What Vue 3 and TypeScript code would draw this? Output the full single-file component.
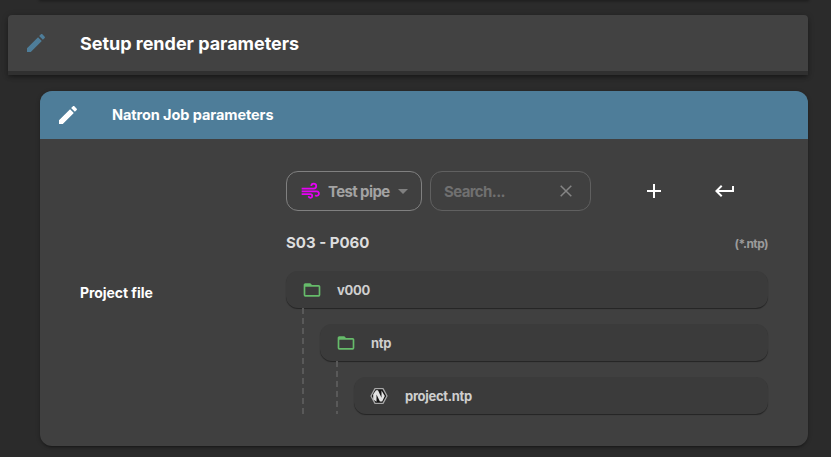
<script setup lang="ts">
interface TreeRow {
  label: string
  kind: 'folder' | 'natron'
  depth: number
}

const rows: TreeRow[] = [
  { label: 'v000', kind: 'folder', depth: 0 },
  { label: 'ntp', kind: 'folder', depth: 1 },
  { label: 'project.ntp', kind: 'natron', depth: 2 },
]
const pencil =
  'M20.71,7.04C21.1,6.65 21.1,6 20.71,5.63L18.37,3.29C18,2.9 17.35,2.9 16.96,3.29L15.12,5.12L18.87,8.87M3,17.25V21H6.75L17.81,9.93L14.06,6.18L3,17.25Z'
</script>

<template>
  <main class="page">
    <div class="previous"></div>
    <header class="step">
      <svg class="icon" viewBox="0 0 24 24"><path :d="pencil" /></svg>
      <h1>Setup render parameters</h1>
    </header>
    <section class="card">
      <div class="card-head">
        <svg class="icon" viewBox="0 0 24 24"><path :d="pencil" /></svg>
        <h2>Natron Job parameters</h2>
      </div>
      <div class="card-body">
        <label class="field-name">Project file</label>
        <div class="picker">
          <div class="toolbar">
            <button class="select">
              <svg class="wind" viewBox="0 0 24 24">
                <path d="M2 9h14.5a3 3 0 1 0-3-3M2 12.4h18a2.7 2.7 0 1 1-1.8 4.7M2 15.8h10.5a2.2 2.2 0 1 1-2.2 2.4" />
              </svg>
              <span class="select-text">Test pipe</span>
              <svg class="caret" viewBox="0 0 10 5"><path d="M0 0h10L5 5z" /></svg>
            </button>
            <div class="search">
              <span class="search-text">Search...</span>
              <svg class="clear" viewBox="0 0 12 12"><path d="M.7.7l10.6 10.6M11.3.7L.7 11.3" /></svg>
            </div>
            <button class="tool add">
              <svg viewBox="0 0 24 24"><path d="M19,13H13V19H11V13H5V11H11V5H13V11H19V13Z" /></svg>
            </button>
            <button class="tool">
              <svg viewBox="0 0 24 24"><path d="M19,7V11H5.83L9.41,7.41L8,6L2,12L8,18L9.41,16.58L5.83,13H21V7H19Z" /></svg>
            </button>
          </div>
          <div class="caption">
            <strong>S03 - P060</strong>
            <span>(*.ntp)</span>
          </div>
          <div class="tree">
            <div v-for="row in rows" :key="row.label" class="line">
              <i v-for="n in row.depth" :key="n" class="guide"></i>
              <div class="row">
                <svg v-if="row.kind === 'folder'" class="row-icon folder" viewBox="0 0 24 24">
                  <path d="M20,18H4V8H20M20,6H12L10,4H4C2.89,4 2,4.89 2,6V18A2,2 0 0,0 4,20H20A2,2 0 0,0 22,18V8C22,6.89 21.1,6 20,6Z" />
                </svg>
                <svg v-else class="row-icon natron-logo" viewBox="0 0 20 20">
                  <path d="M6 2.6h8l4 7.4-4 7.4H6L2 10z" fill="#161616" stroke="#a8a8a8" stroke-width="1.3" stroke-linejoin="round" />
                  <path d="M4.2 13.6V8.2L7 4.2h2l3.5 7.5V4.5l3.3 5.4-2.6 5.7h-2.3L7.5 8.6v7.2z" fill="#e2e2e2" />
                </svg>
                <span class="name">{{ row.label }}</span>
              </div>
            </div>
          </div>
        </div>
      </div>
    </section>
  </main>
</template>

<style>
body {
  margin: 0;
  background: #2b2b2b;
  overflow: hidden;
}
</style>

<style scoped>
.page {
  box-sizing: border-box;
  width: 831px;
  height: 457px;
  padding: 0 23px 0 8px;
  overflow: hidden;
  background: #2b2b2b;
  color: #fff;
  font-family: Inter, "Liberation Sans", sans-serif;
  font-weight: 700;
}
svg { display: block; flex: none; fill: currentColor; }
h1, h2 { margin: 0; font-weight: 700; white-space: nowrap; }
.previous {
  height: 0;
  margin: 0 0 15px 32px;
  box-shadow: 0 0 3px 1px rgba(0, 0, 0, 0.45);
}
.step {
  box-sizing: border-box;
  display: flex;
  align-items: center;
  gap: 32px;
  height: 60px;
  padding-left: 16px;
  background: #424242;
  border-bottom: 4px solid #303030;
  border-radius: 4px 4px 0 0;
  box-shadow: 0 3px 4px -1px rgba(0, 0, 0, 0.3), 0 1px 6px rgba(0, 0, 0, 0.22);
}
.icon { width: 24px; height: 24px; }
.step .icon { color: #4e7d99; }
.step h1 { font-size: 18px; letter-spacing: -0.02px; }
.card {
  height: 355px;
  margin: 16px 0 0 32px;
  overflow: hidden;
  background: #404040;
  border-radius: 12px;
  box-shadow: 0 2px 2px -1px rgba(0, 0, 0, 0.3), 0 1px 4px rgba(0, 0, 0, 0.25);
}
.card-head {
  display: flex;
  align-items: center;
  gap: 32px;
  height: 48px;
  padding-left: 16px;
  background: #4e7d99;
}
.card-head h2 { padding-bottom: 1px; font-size: 14.5px; letter-spacing: -0.08px; }
.card-body {
  display: flex;
  align-items: center;
  height: 307px;
  padding: 0 40px;
}
.field-name { width: 206px; font-size: 14px; letter-spacing: -0.06px; white-space: nowrap; }
.picker { width: 482px; height: 243px; }
.toolbar { display: flex; align-items: center; height: 40px; }
button {
  margin: 0;
  padding: 0;
  background: none;
  border: 0;
  color: inherit;
  font: inherit;
}
.select, .search {
  box-sizing: border-box;
  display: flex;
  align-items: center;
  height: 40px;
  border: 1px solid #808080;
  border-radius: 12px;
  font-size: 15px;
  font-weight: 700;
  letter-spacing: -0.62px;
  white-space: nowrap;
}
.select { width: 136px; padding: 0 13px 0 13px; color: #a3a3a3; }
.wind {
  width: 20px;
  height: 20px;
  margin-bottom: 1px;
  fill: none;
  stroke: #e600f5;
  stroke-width: 2.1;
}
.select-text { width: 66px; margin: 1px 0 0 8px; text-align: left; }
.caret { width: 10px; height: 5px; margin-left: 4px; color: #808080; }
.search {
  justify-content: space-between;
  width: 161px;
  margin-left: 8px;
  padding: 0 18px 0 13px;
  border-color: #606060;
  color: #707070;
}
.search-text { padding-top: 1px; }
.clear { width: 12px; height: 12px; fill: none; stroke: #858585; stroke-width: 1.5; }
.tool { width: 24px; height: 24px; }
.tool svg { width: 24px; height: 24px; }
.add { margin: 0 47px 0 51px; }
.caption {
  display: flex;
  align-items: center;
  justify-content: space-between;
  height: 60px;
  padding-top: 2px;
  box-sizing: border-box;
}
.caption strong { color: #dedede; font-size: 15px; font-weight: 700; letter-spacing: 0; }
.caption span { padding-top: 2px; color: #9b9b9b; font-size: 12px; font-weight: 700; letter-spacing: -0.55px; }
.tree { display: flex; flex-direction: column; gap: 16px; }
.line { display: flex; height: 37px; }
.guide {
  position: relative;
  flex: none;
  width: 34px;
}
.guide::before {
  content: "";
  position: absolute;
  top: -16px;
  left: 16px;
  width: 2px;
  height: 53px;
  background: repeating-linear-gradient(to bottom, #595959 0 6px, transparent 6px 10px);
}
.line:last-child .guide:first-child::before {
  background: repeating-linear-gradient(to bottom, #595959 0 3px, transparent 3px 7px, #595959 7px 10px);
}
.row {
  display: flex;
  align-items: center;
  flex: 1;
  padding-left: 16px;
  background: #3b3b3b;
  border-radius: 12px;
  box-shadow: 0 1px 1px rgba(0, 0, 0, 0.45);
}
.row-icon { width: 20px; height: 20px; }
.natron-logo { margin: 0 1px 0 -1px; }
.folder { color: #66bb6a; }
.name { margin-left: 15px; color: #cfcfcf; font-size: 13px; letter-spacing: -0.3px; }
</style>
